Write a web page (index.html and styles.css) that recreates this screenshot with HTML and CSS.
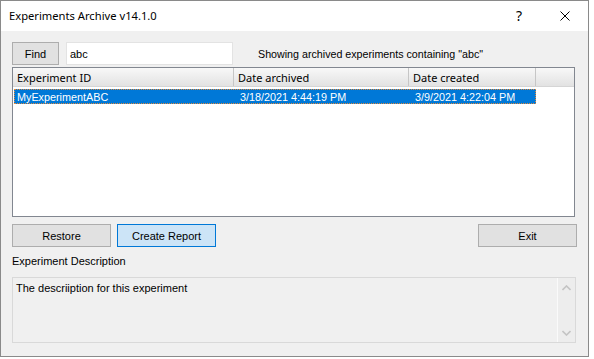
FILE: index.html
```html
<!DOCTYPE html>
<html>
<head>
<meta charset="utf-8">
<link rel="stylesheet" href="styles.css">
</head>
<body>
<div class="window">
  <div class="titlebar">
    <div class="title">Experiments Archive v14.1.0</div>
    <div class="tb-btn help">?</div>
    <div class="tb-btn close">
      <svg width="10" height="10" viewBox="0 0 10 10"><path d="M0.5 0.5 L9.5 9.5 M9.5 0.5 L0.5 9.5" stroke="#000" stroke-width="1" fill="none"/></svg>
    </div>
  </div>
  <div class="client">
    <div class="search-row">
      <div class="btn find">Find</div>
      <div class="textbox">abc</div>
      <div class="status">Showing archived experiments containing "abc"</div>
    </div>
    <div class="listview">
      <div class="header">
        <div class="hcol c1">Experiment ID</div>
        <div class="hcol c2">Date archived</div>
        <div class="hcol c3">Date created</div>
        <div class="hcol c4"></div>
      </div>
      <div class="row selected">
        <div class="cell c1">MyExperimentABC</div>
        <div class="cell c2">3/18/2021 4:44:19 PM</div>
        <div class="cell c3">3/9/2021 4:22:04 PM</div>
      </div>
    </div>
    <div class="button-row">
      <div class="btn wide">Restore</div>
      <div class="btn wide primary">Create Report</div>
      <div class="spacer"></div>
      <div class="btn wide">Exit</div>
    </div>
    <div class="label">Experiment Description</div>
    <div class="description">
      <div class="desc-text">The descriiption for this experiment</div>
      <div class="scrollbar">
        <svg width="9" height="6" viewBox="0 0 9 6"><path d="M0.5 5 L4.5 1 L8.5 5" stroke="#c4c4c4" stroke-width="1.6" fill="none"/></svg>
        <svg width="9" height="6" viewBox="0 0 9 6"><path d="M0.5 1 L4.5 5 L8.5 1" stroke="#c4c4c4" stroke-width="1.6" fill="none"/></svg>
      </div>
    </div>
  </div>
</div>
</body>
</html>
```
FILE: styles.css
```css
html, body {
  margin: 0;
  padding: 0;
}
body {
  background: #ffffff;
  width: 594px;
  height: 359px;
  overflow: hidden;
  font-family: "Liberation Sans", Arial, sans-serif;
  font-size: 11px;
  color: #000;
}
.window {
  box-sizing: border-box;
  width: 589px;
  height: 357px;
  border: 1px solid #8a8a8a;
  display: flex;
  flex-direction: column;
  background: #f0f0f0;
}
.titlebar {
  height: 30px;
  background: #ffffff;
  display: flex;
  align-items: center;
  flex: none;
}
.title {
  flex: 1;
  padding-left: 8px;
  font-family: "Noto Sans", sans-serif;
  font-size: 11.2px;
  padding-bottom: 2px;
}
.tb-btn {
  width: 46px;
  height: 30px;
  display: flex;
  align-items: center;
  justify-content: center;
}
.help {
  font-family: "Noto Sans", sans-serif;
  font-size: 14px;
  padding-bottom: 2px;
  box-sizing: border-box;
}
.client {
  flex: 1;
  padding: 11px 11px 13px 11px;
  display: flex;
  flex-direction: column;
}
.search-row {
  display: flex;
  align-items: center;
  height: 23px;
}
.btn {
  box-sizing: border-box;
  height: 23px;
  border: 1px solid #adadad;
  background: #e1e1e1;
  display: flex;
  align-items: center;
  justify-content: center;
}
.find {
  width: 47px;
}
.textbox {
  box-sizing: border-box;
  margin-left: 7px;
  width: 167px;
  height: 23px;
  background: #fff;
  border: 1px solid #e3e3e3;
  padding-left: 3px;
  display: flex;
  align-items: center;
}
.status {
  margin-left: 25px;
  font-size: 10.7px;
}
.listview {
  box-sizing: border-box;
  margin-top: 2px;
  width: 563px;
  height: 150px;
  border: 1px solid #828790;
  background: #fff;
  flex: none;
}
.header {
  display: flex;
  height: 19px;
  background: linear-gradient(to bottom, #f8f8f8, #e2e2e2);
  border-bottom: 1px solid #d5d5d5;
  box-sizing: border-box;
}
.hcol {
  box-sizing: border-box;
  border-right: 1px solid #c6c6c6;
  padding-left: 4px;
  padding-top: 1px;
  display: flex;
  align-items: center;
  font-family: "Noto Sans", sans-serif;
  font-size: 11px;
}
.c1 { width: 221px; }
.c2 { width: 175px; }
.c3 { width: 127px; }
.c4 { flex: 1; border-right: none; }
.row {
  display: flex;
  height: 15px;
  margin-top: 2px;
  margin-left: 1px;
  width: 522px;
}
.row .cell {
  box-sizing: border-box;
  padding-left: 3px;
  display: flex;
  align-items: center;
  white-space: nowrap;
  font-size: 10.8px;
}
.row .c1 { width: 220px; }
.row .c2 { width: 175px; padding-left: 6px; }
.row .c3 { width: 127px; padding-left: 6px; }
.selected {
  background: #0078d7;
  color: #fff;
  outline: 1px dotted #e08a3c;
  outline-offset: -1px;
}
.button-row {
  display: flex;
  margin-top: 7px;
  height: 23px;
  width: 565px;
}
.wide {
  width: 99px;
}
.primary {
  margin-left: 6px;
  border-color: #0078d7;
  background: #cce4f7;
}
.spacer {
  flex: 1;
}
.label {
  margin-top: 6px;
  height: 16px;
  line-height: 16px;
  margin-bottom: 8px;
  font-size: 11px;
}
.description {
  box-sizing: border-box;
  width: 564px;
  height: 66px;
  border: 1px solid #d9d9d9;
  display: flex;
}
.desc-text {
  flex: 1;
  padding: 4px 0 0 3px;
}
.scrollbar {
  width: 17px;
  border-left: 1px solid #fafafa;
  background: #ededed;
  display: flex;
  flex-direction: column;
  justify-content: space-between;
  align-items: center;
  padding: 7px 0 6px 0;
}
```
